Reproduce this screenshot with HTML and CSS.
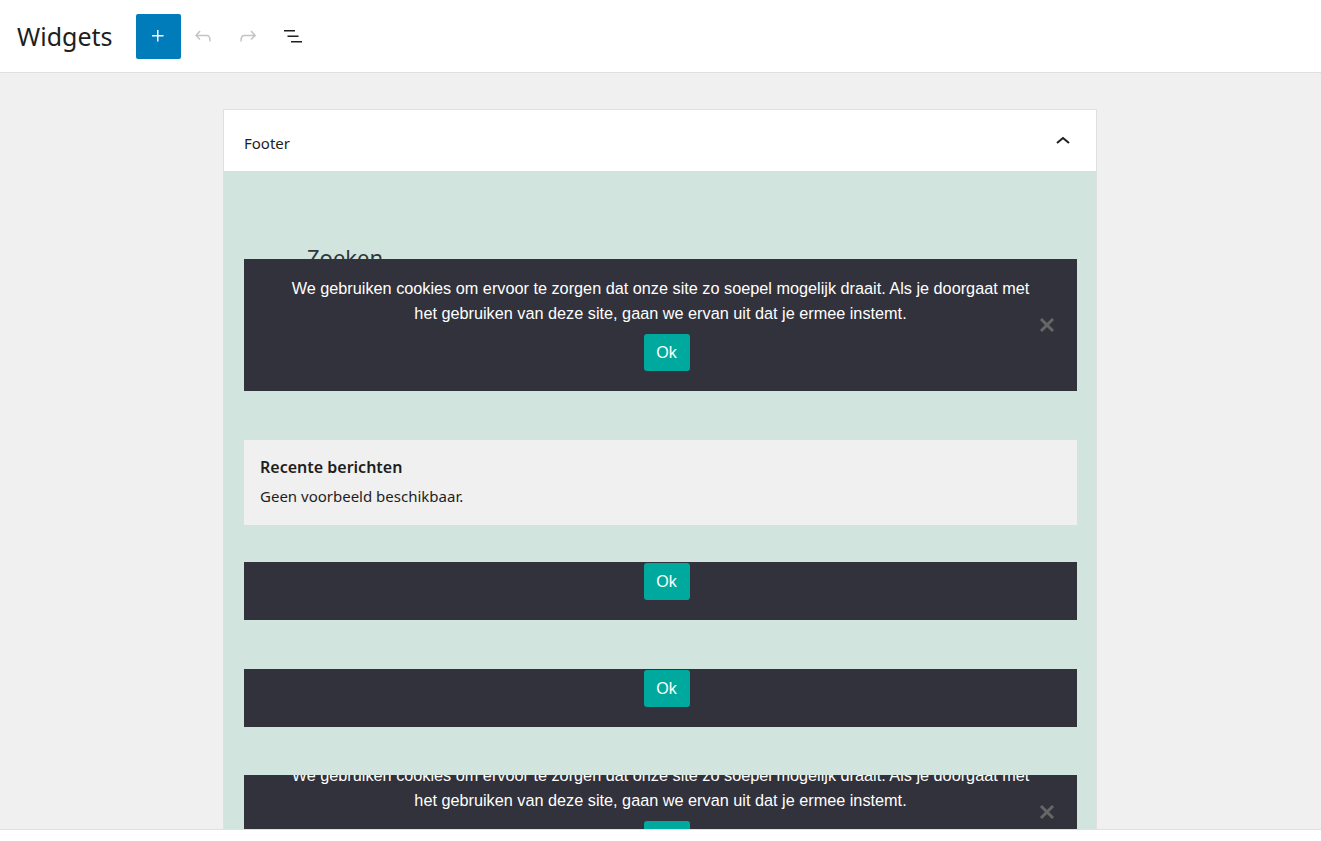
FILE: index.html
```html
<!DOCTYPE html>
<html lang="nl">
<head>
  <meta charset="UTF-8" />
  <meta name="viewport" content="width=device-width, initial-scale=1.0" />
  <title>Widgets</title>
  <link rel="stylesheet" href="styles.css">
</head>
<body>
  <div class="topbar">
    <h1 class="title">Widgets</h1>
    <div class="toolbar">
      <button class="tool inserter" aria-label="Blok toevoegen">
        <svg viewBox="0 0 24 24" width="24" height="24"><path d="M11 12.5V17.5H12.5V12.5H17.5V11H12.5V6H11V11H6V12.5H11Z" fill="currentColor"/></svg>
      </button>
      <button class="tool disabled" aria-label="Ongedaan maken">
        <svg viewBox="0 0 24 24" width="24" height="24"><path d="M18.3 11.7c-.6-.6-1.4-.9-2.3-.9H6.7l2.9-3.3-1.1-1-4.5 5L8.5 16l1-1-2.7-2.7H16c.5 0 .9.2 1.3.5 1 1 1 3.4 1 4.5v.3h1.5v-.2c0-1.5 0-4.3-1.5-5.7z" fill="currentColor"/></svg>
      </button>
      <button class="tool disabled" aria-label="Opnieuw">
        <svg viewBox="0 0 24 24" width="24" height="24"><path d="M15.6 6.5l-1.1 1 2.9 3.3H8c-.9 0-1.7.3-2.3.9-1.4 1.5-1.4 4.2-1.4 5.6v.2h1.5v-.3c0-1.1 0-3.5 1-4.5.3-.3.7-.5 1.3-.5h9.2L14.5 15l1.1 1.1 4.6-4.6-4.6-5z" fill="currentColor"/></svg>
      </button>
      <button class="tool" aria-label="Lijstweergave">
        <svg viewBox="0 0 24 24" width="24" height="24"><path d="M3 6h11v1.5H3V6Zm3.5 5.5h11V13h-11v-1.5ZM21 17H10v1.5h11V17Z" fill="currentColor"/></svg>
      </button>
    </div>
  </div>

  <div class="main">
    <div class="area">
      <div class="area-header">
        <span>Footer</span>
        <svg class="chevron" viewBox="0 0 16 10" width="16" height="10"><polyline points="2,8 8,3 14,8" fill="none" stroke="#1e1e1e" stroke-width="2"/></svg>
      </div>
      <div class="area-body">
        <div class="search-widget">
          <h2>Zoeken</h2>
        </div>

        <div class="cookie">
          <div class="cookie-inner">
            <p>We gebruiken cookies om ervoor te zorgen dat onze site zo soepel mogelijk draait. Als je doorgaat met het gebruiken van deze site, gaan we ervan uit dat je ermee instemt.</p>
            <button class="ok">Ok</button>
            <span class="close"><svg viewBox="0 0 16 16" width="16" height="16"><path d="M2 2L14 14M14 2L2 14" stroke="currentColor" stroke-width="3"/></svg></span>
          </div>
        </div>

        <div class="preview">
          <h3>Recente berichten</h3>
          <p>Geen voorbeeld beschikbaar.</p>
        </div>

        <div class="cookie short">
          <div class="cookie-inner">
            <p>We gebruiken cookies om ervoor te zorgen dat onze site zo soepel mogelijk draait. Als je doorgaat met het gebruiken van deze site, gaan we ervan uit dat je ermee instemt.</p>
            <button class="ok">Ok</button>
            <span class="close"><svg viewBox="0 0 16 16" width="16" height="16"><path d="M2 2L14 14M14 2L2 14" stroke="currentColor" stroke-width="3"/></svg></span>
          </div>
        </div>

        <div class="cookie short">
          <div class="cookie-inner">
            <p>We gebruiken cookies om ervoor te zorgen dat onze site zo soepel mogelijk draait. Als je doorgaat met het gebruiken van deze site, gaan we ervan uit dat je ermee instemt.</p>
            <button class="ok">Ok</button>
            <span class="close"><svg viewBox="0 0 16 16" width="16" height="16"><path d="M2 2L14 14M14 2L2 14" stroke="currentColor" stroke-width="3"/></svg></span>
          </div>
        </div>

        <div class="cookie cut">
          <div class="cookie-inner">
            <p>We gebruiken cookies om ervoor te zorgen dat onze site zo soepel mogelijk draait. Als je doorgaat met het gebruiken van deze site, gaan we ervan uit dat je ermee instemt.</p>
            <button class="ok">Ok</button>
            <span class="close"><svg viewBox="0 0 16 16" width="16" height="16"><path d="M2 2L14 14M14 2L2 14" stroke="currentColor" stroke-width="3"/></svg></span>
          </div>
        </div>
      </div>
    </div>
  </div>

  <div class="footer-bar"></div>
</body>
</html>
```

FILE: styles.css
```css
html, body {
  height: 100%;
}
body {
  margin: 0;
  font-family: "Noto Sans", sans-serif;
  color: #1e1e1e;
  background: #f0f0f0;
  display: flex;
  flex-direction: column;
  overflow: hidden;
}
.topbar {
  height: 72px;
  flex: none;
  background: #fff;
  border-bottom: 1px solid #e0e0e0;
  display: flex;
  align-items: center;
  padding-left: 17px;
}
.title {
  margin: 0 23px 0 0;
  font-size: 25px;
  font-weight: 400;
  color: #1e1e1e;
}
.toolbar {
  display: flex;
  align-items: center;
}
.tool {
  width: 45px;
  height: 45px;
  padding: 0;
  border: none;
  background: none;
  color: #1e1e1e;
  display: flex;
  align-items: center;
  justify-content: center;
  cursor: pointer;
}
.tool.inserter {
  background: #007cba;
  color: #fff;
  border-radius: 2px;
}
.tool.disabled {
  color: #c3c4c7;
}
.main {
  flex: 1;
  overflow: hidden;
  padding: 36px 1px 0 0;
}
.area {
  width: 872px;
  margin: 0 auto;
  border: 1px solid #e0e0e0;
  border-bottom: none;
  background: #d2e4de;
}
.area-header {
  height: 61px;
  box-sizing: border-box;
  background: #fff;
  display: flex;
  align-items: center;
  justify-content: space-between;
  padding: 4px 25px 0 20px;
  font-size: 15px;
}
.chevron {
  margin-top: -6px;
}
.area-body {
  padding: 20px 19px 20px 20px;
}
.search-widget {
  height: 68px;
  box-sizing: border-box;
  padding: 52px 0 0 63px;
}
.search-widget h2 {
  margin: 0;
  font-size: 22px;
  line-height: 28px;
  font-weight: 400;
  color: #32373c;
}
.cookie {
  position: relative;
  background: #32323c;
  overflow: hidden;
  height: 132px;
  font-family: "Liberation Sans", Arial, sans-serif;
}
.cookie-inner {
  position: relative;
  padding: 17px 45px 20px;
  text-align: center;
}
.cookie p {
  margin: 0;
  color: #fff;
  font-size: 16.25px;
  line-height: 25px;
}
.ok {
  margin: 8px 0 0 12px;
  width: 46px;
  height: 37px;
  border: none;
  border-radius: 3px;
  background: #00a99d;
  color: #fff;
  font-family: "Liberation Sans", Arial, sans-serif;
  font-size: 16px;
  cursor: pointer;
}
.close {
  position: absolute;
  right: 22px;
  top: 50%;
  margin-top: -8px;
  width: 16px;
  height: 16px;
  color: #666;
}
.close svg {
  display: block;
}
.cookie.short {
  height: 58px;
  margin-top: 49px;
}
.cookie.short .cookie-inner {
  margin-top: -74px;
}
.cookie.cut {
  margin-top: 48px;
}
.cookie.cut .cookie-inner {
  margin-top: -29px;
}
.preview {
  margin-top: 49px;
  margin-bottom: 37px;
  height: 85px;
  box-sizing: border-box;
  background: #f0f0f0;
  padding: 15px 16px;
}
.preview + .cookie.short {
  margin-top: 0;
}
.preview h3 {
  margin: 0;
  font-size: 16px;
  font-weight: 600;
  line-height: 24px;
  color: #1e1e1e;
}
.preview p {
  margin: 6px 0 0;
  font-size: 15px;
  line-height: 22px;
}
.footer-bar {
  flex: none;
  height: 11px;
  background: #fff;
  border-top: 1px solid #e0e0e0;
}
```
